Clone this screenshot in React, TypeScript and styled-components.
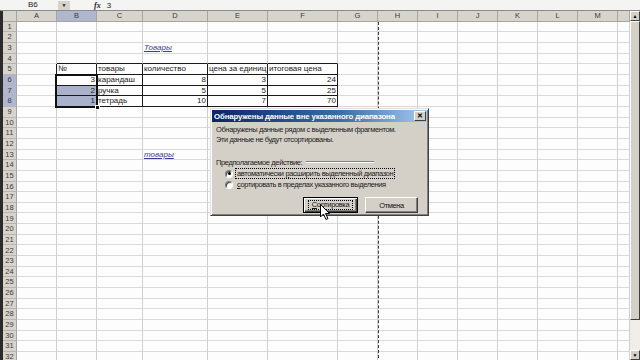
import React from 'react';
import styled, { createGlobalStyle, css } from 'styled-components';

const GlobalStyle = createGlobalStyle`
  html, body {
    margin: 0;
    padding: 0;
    background: #ffffff;
  }
  * {
    box-sizing: border-box;
  }
`;

// колонки листа и их ширина
const columns = [
  { key: 'A', w: 40 },
  { key: 'B', w: 40 },
  { key: 'C', w: 46 },
  { key: 'D', w: 65 },
  { key: 'E', w: 60 },
  { key: 'F', w: 70 },
  { key: 'G', w: 40 },
  { key: 'H', w: 40 },
  { key: 'I', w: 40 },
  { key: 'J', w: 40 },
  { key: 'K', w: 40 },
  { key: 'L', w: 40 },
  { key: 'M', w: 40 },
  { key: '', w: 12 },
];

const ROWS = 32;
const ROW_H = 10.67;

type CellData = { text: string; align?: 'left' | 'right'; link?: boolean };

const cells: Record<string, CellData> = {
  D3: { text: 'Товары', link: true },
  B5: { text: '№' },
  C5: { text: 'товары' },
  D5: { text: 'количество' },
  E5: { text: 'цена за единиц' },
  F5: { text: 'итоговая цена' },
  B6: { text: '3', align: 'right' },
  C6: { text: 'карандаш' },
  D6: { text: '8', align: 'right' },
  E6: { text: '3', align: 'right' },
  F6: { text: '24', align: 'right' },
  B7: { text: '2', align: 'right' },
  C7: { text: 'ручка' },
  D7: { text: '5', align: 'right' },
  E7: { text: '5', align: 'right' },
  F7: { text: '25', align: 'right' },
  B8: { text: '1', align: 'right' },
  C8: { text: 'тетрадь' },
  D8: { text: '10', align: 'right' },
  E8: { text: '7', align: 'right' },
  F8: { text: '70', align: 'right' },
  D13: { text: 'товары', link: true },
};

const tableCols = ['B', 'C', 'D', 'E', 'F'];
const inTable = (c: string, r: number) => tableCols.includes(c) && r >= 5 && r <= 8;

const App: React.FC = () => {
  const rows = Array.from({ length: ROWS }, (_, i) => i + 1);

  return (
    <Screen>
      <GlobalStyle />
      <FormulaBar>
        <NameBox>B6</NameBox>
        <DropButton>▼</DropButton>
        <FxLabel>fx</FxLabel>
        <FormulaValue>3</FormulaValue>
      </FormulaBar>

      <SheetArea>
        <LeftStrip />
        <Grid $cols={columns.map((c) => c.w + 'px').join(' ')}>
          <Corner />
          {columns.map((c) => (
            <ColHeader key={'h' + c.key} $active={c.key === 'B'}>
              {c.key}
            </ColHeader>
          ))}

          {rows.map((r) => (
            <React.Fragment key={r}>
              <RowHeader $active={r >= 6 && r <= 8}>{r}</RowHeader>
              {columns.map((c, ci) => {
                const id = c.key + r;
                const data = cells[id];
                const next = columns[ci + 1]?.key;
                const rightDark = inTable(c.key, r) || (next !== undefined && inTable(next, r));
                const bottomDark = inTable(c.key, r) || inTable(c.key, r + 1);
                return (
                  <Cell
                    key={id}
                    $rightDark={rightDark}
                    $bottomDark={bottomDark}
                    $selected={c.key === 'B' && (r === 7 || r === 8)}
                    $align={data?.align}
                  >
                    {data && (data.link ? <LinkText>{data.text}</LinkText> : data.text)}
                  </Cell>
                );
              })}
            </React.Fragment>
          ))}

          <Selection>
            <FillHandle />
          </Selection>
          <PageBreak />
        </Grid>
        <ScrollBar>
          <ScrollArrow>▲</ScrollArrow>
          <ScrollThumb />
          <ScrollTrack />
          <ScrollArrow>▼</ScrollArrow>
        </ScrollBar>
      </SheetArea>

      <Dialog>
        <TitleBar>
          <TitleText>Обнаружены данные вне указанного диапазона</TitleText>
          <CloseButton>✕</CloseButton>
        </TitleBar>
        <DialogBody>
          <Message>
            Обнаружены данные рядом с выделенным фрагментом.
            <br />
            Эти данные не будут отсортированы.
          </Message>
          <GroupLabel>
            <span>Предполагаемое действие:</span>
            <EtchedLine />
          </GroupLabel>
          <RadioList>
            <RadioRow>
              <RadioCircle $checked />
              <RadioText $focused>
                автоматически <u>р</u>асширить выделенный диапазон
              </RadioText>
            </RadioRow>
            <RadioRow>
              <RadioCircle />
              <RadioText>
                <u>с</u>ортировать в пределах указанного выделения
              </RadioText>
            </RadioRow>
          </RadioList>
          <ButtonRow>
            <DialogButton $default $w={55}>
              <ButtonFocus>
                <u>С</u>ортировка
              </ButtonFocus>
            </DialogButton>
            <DialogButton $w={53}>Отмена</DialogButton>
          </ButtonRow>
        </DialogBody>
        <Pointer viewBox="0 0 11 17" width="11" height="17">
          <path d="M0.5 0.5 L0.5 13 L3.5 10 L6 15.5 L8 14.5 L5.5 9.5 L9.5 9.5 Z" fill="#fff" stroke="#000" strokeWidth="1" />
        </Pointer>
      </Dialog>
    </Screen>
  );
};

export default App;

const uiFont = css`
  font-family: 'Liberation Sans', Arial, sans-serif;
`;

// весь экран
const Screen = styled.div`
  position: relative;
  width: 640px;
  height: 360px;
  overflow: hidden;
  background: #ffffff;
  ${uiFont};
  display: flex;
  flex-direction: column;
`;

// строка формул
const FormulaBar = styled.div`
  height: 11px;
  flex: none;
  display: flex;
  align-items: center;
  background: #f4f4f2;
  border-bottom: 1px solid #8a8a8a;
  font-size: 8px;
  color: #222;
`;

const NameBox = styled.div`
  width: 58px;
  padding-left: 28px;
  line-height: 10px;
`;

const DropButton = styled.div`
  width: 12px;
  height: 9px;
  background: #d6d3cc;
  font-size: 5px;
  display: flex;
  align-items: center;
  justify-content: center;
  color: #111;
`;

const FxLabel = styled.div`
  margin-left: 24px;
  font-family: 'Liberation Serif', serif;
  font-style: italic;
  font-weight: bold;
  font-size: 8px;
`;

const FormulaValue = styled.div`
  margin-left: 6px;
`;

// область листа
const SheetArea = styled.div`
  flex: 1;
  display: flex;
  min-height: 0;
`;

const LeftStrip = styled.div`
  width: 3px;
  background: #2b2b2b;
  flex: none;
`;

const Grid = styled.div<{ $cols: string }>`
  position: relative;
  display: grid;
  grid-template-columns: 14px ${(p) => p.$cols};
  grid-template-rows: repeat(33, ${ROW_H}px);
  flex: none;
  width: 627px;
  overflow: hidden;
  font-size: 8px;
`;

const headerBase = css`
  background: #d7d4ce;
  border-right: 1px solid #a8a5a0;
  border-bottom: 1px solid #a8a5a0;
  color: #3a3a3a;
  font-size: 7.5px;
  display: flex;
  align-items: center;
  justify-content: center;
  line-height: 1;
`;

const Corner = styled.div`
  ${headerBase};
`;

const ColHeader = styled.div<{ $active?: boolean }>`
  ${headerBase};
  background: ${(p) => (p.$active ? '#afb6cd' : '#d7d4ce')};
`;

const RowHeader = styled.div<{ $active?: boolean }>`
  ${headerBase};
  background: ${(p) => (p.$active ? '#afb6cd' : '#d7d4ce')};
  border-bottom-color: #b8b5b0;
`;

const Cell = styled.div<{
  $rightDark?: boolean;
  $bottomDark?: boolean;
  $selected?: boolean;
  $align?: 'left' | 'right';
}>`
  background: ${(p) => (p.$selected ? '#a9b1cc' : '#fdfdfd')};
  border-right: 1px solid ${(p) => (p.$rightDark ? '#1a1a1a' : '#cfcfcf')};
  border-bottom: 1px solid ${(p) => (p.$bottomDark ? '#1a1a1a' : '#d9d9d9')};
  color: #1c1c1c;
  line-height: 10px;
  padding: 0 1px;
  white-space: nowrap;
  overflow: visible;
  text-align: ${(p) => p.$align ?? 'left'};
`;

const LinkText = styled.span`
  color: #3b3b9c;
  font-style: italic;
  text-decoration: underline;
`;

// рамка выделения B6:B8 (лежит поверх ячеек)
const Selection = styled.div`
  position: absolute;
  grid-column: 3 / 4;
  grid-row: 7 / 10;
  top: -1px;
  right: -1px;
  bottom: -1px;
  left: -2px;
  border: 2px solid #111;
  pointer-events: none;
  z-index: 2;
`;

const FillHandle = styled.div`
  position: absolute;
  right: -4px;
  bottom: -4px;
  width: 5px;
  height: 5px;
  background: #111;
  border: 1px solid #fff;
`;

// разрыв страницы
const PageBreak = styled.div`
  position: absolute;
  grid-column: 8 / 9;
  grid-row: 2 / 34;
  top: 0;
  bottom: 0;
  right: -1px;
  width: 1px;
  border-right: 1px dashed #3a3a3a;
  pointer-events: none;
  z-index: 1;
`;

const ScrollBar = styled.div`
  width: 10px;
  flex: none;
  display: flex;
  flex-direction: column;
  background: #ecebe6;
`;

const ScrollArrow = styled.div`
  height: 10px;
  flex: none;
  background: #d4d0c8;
  border: 1px solid;
  border-color: #fff #404040 #404040 #fff;
  font-size: 5px;
  display: flex;
  align-items: center;
  justify-content: center;
  color: #000;
`;

const ScrollThumb = styled.div`
  height: 299px;
  flex: none;
  background: #d4d0c8;
  border: 1px solid;
  border-color: #fff #404040 #404040 #fff;
`;

const ScrollTrack = styled.div`
  flex: 1;
  background: #efeeea;
`;

// диалог сортировки
const Dialog = styled.div`
  position: absolute;
  left: 210px;
  top: 108px;
  width: 219px;
  height: 108px;
  background: #d4d0c8;
  border: 1px solid;
  border-color: #dfdfdf #404040 #404040 #dfdfdf;
  box-shadow: inset 1px 1px 0 #fff, inset -1px -1px 0 #808080;
  padding: 1px;
  z-index: 5;
  ${uiFont};
`;

const TitleBar = styled.div`
  height: 12px;
  display: flex;
  align-items: center;
  justify-content: space-between;
  padding: 0 1px 0 2px;
  background: linear-gradient(90deg, #0a246a 0%, #3a6ea5 60%, #a6caf0 100%);
`;

const TitleText = styled.div`
  color: #fff;
  font-weight: bold;
  font-size: 7.8px;
  white-space: nowrap;
  letter-spacing: -0.12px;
`;

const CloseButton = styled.div`
  width: 12px;
  height: 10px;
  background: #d4d0c8;
  border: 1px solid;
  border-color: #fff #404040 #404040 #fff;
  font-size: 7px;
  font-weight: bold;
  line-height: 8px;
  text-align: center;
  color: #000;
`;

const DialogBody = styled.div`
  display: flex;
  flex-direction: column;
  padding: 3px 9px 0 4px;
  font-size: 7.5px;
  letter-spacing: -0.38px;
  color: #1a1a1a;
`;

const Message = styled.div`
  line-height: 10px;
  white-space: nowrap;
`;

const GroupLabel = styled.div`
  margin-top: 12px;
  width: 158px;
  height: 10px;
  display: flex;
  align-items: center;
  gap: 4px;
  white-space: nowrap;
`;

const EtchedLine = styled.div`
  flex: 1;
  height: 2px;
  border-top: 1px solid #808080;
  border-bottom: 1px solid #fff;
`;

const RadioList = styled.div`
  display: flex;
  flex-direction: column;
  padding-left: 9px;
  margin-top: 1px;
`;

const RadioRow = styled.div`
  height: 11px;
  display: flex;
  align-items: center;
  gap: 2px;
`;

const RadioCircle = styled.div<{ $checked?: boolean }>`
  width: 8px;
  height: 8px;
  border-radius: 50%;
  background: #fff;
  border: 1px solid;
  border-color: #808080 #fff #fff #808080;
  box-shadow: inset 1px 1px 0 #404040;
  display: flex;
  align-items: center;
  justify-content: center;
  &::after {
    content: '';
    width: 3px;
    height: 3px;
    border-radius: 50%;
    background: ${(p) => (p.$checked ? '#000' : 'transparent')};
  }
`;

const RadioText = styled.div<{ $focused?: boolean }>`
  white-space: nowrap;
  line-height: 9px;
  padding: 0 1px;
  border: 1px dotted ${(p) => (p.$focused ? '#000' : 'transparent')};
`;

const ButtonRow = styled.div`
  display: flex;
  justify-content: flex-end;
  gap: 7px;
  margin-top: 7px;
`;

const DialogButton = styled.div<{ $default?: boolean; $w: number }>`
  width: ${(p) => p.$w}px;
  height: 16px;
  display: flex;
  align-items: center;
  justify-content: center;
  background: #d4d0c8;
  border: 1px solid;
  border-color: ${(p) => (p.$default ? '#000' : '#fff #404040 #404040 #fff')};
  box-shadow: ${(p) =>
    p.$default
      ? 'inset 1px 1px 0 #fff, inset -1px -1px 0 #404040, inset -2px -2px 0 #808080'
      : 'inset -1px -1px 0 #808080'};
  font-size: 7.5px;
  color: #111;
`;

const ButtonFocus = styled.div`
  border: 1px dotted #000;
  padding: 0 3px;
  line-height: 8px;
`;

const Pointer = styled.svg`
  position: absolute;
  left: 109px;
  top: 95px;
`;
